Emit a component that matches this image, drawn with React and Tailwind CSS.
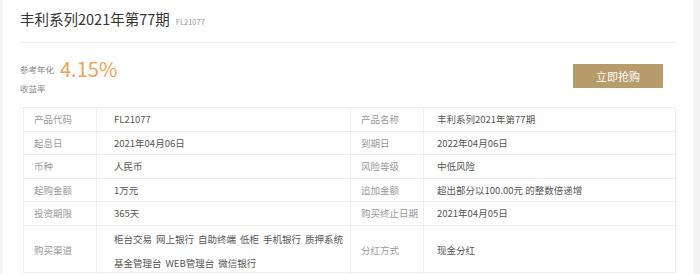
import React from 'react';

const rows = [
    ['产品代码', 'FL21077', '产品名称', '丰利系列2021年第77期'],
    ['起息日', '2021年04月06日', '到期日', '2022年04月06日'],
    ['币种', '人民币', '风险等级', '中低风险'],
    ['起购金额', '1万元', '追加金额', '超出部分以100.00元 的整数倍递增'],
    ['投资期限', '365天', '购买终止日期', '2021年04月05日'],
];

const channels = ['柜台交易', '网上银行', '自助终端', '低柜', '手机银行', '质押系统', '基金管理台', 'WEB管理台', '微信银行'];

const font = { fontFamily: '"Noto Sans CJK SC", "Noto Sans", sans-serif' };

const Cell = ({ children, kind, last }) => (
    <div
        className={
            'flex items-center border-[#eeeeee] ' +
            (last ? '' : 'border-r ') +
            (kind === 'label' ? 'pl-[10px] text-[#999999]' : kind === 'v1' ? 'pl-[17px] text-[#555555]' : 'pl-[13px] text-[#555555]')
        }
    >
        {children}
    </div>
);

const App = () => {
    return (
        <div className="w-[700px] h-[274px] bg-[#f4f4f4] overflow-hidden" style={font}>
            <div className="ml-[3px] w-[690px] h-[274px] bg-white">
                {/* Title */}
                <div className="flex items-baseline pl-[17px] pt-[8px] h-[42px]">
                    <h1 className="text-[14.5px] text-[#333333] leading-[22px]">丰利系列2021年第77期</h1>
                    <span className="ml-[6px] text-[7.5px] text-[#999999]">FL21077</span>
                </div>
                <div className="mx-[17px] h-px bg-[#f2f2f2]"></div>

                {/* Rate + button */}
                <div className="flex items-start justify-between pl-[17px] pr-[30px] h-[64px]">
                    <div className="pt-[14px]">
                        <div className="flex items-center">
                            <span className="text-[8.5px] text-[#888888]">参考年化</span>
                            <span className="ml-[6px] text-[20px] leading-[24px] text-[#f0a255]">4.15%</span>
                        </div>
                        <div className="text-[8.5px] text-[#888888] leading-[12px] mt-[1px]">收益率</div>
                    </div>
                    <button className="mt-[21px] w-[90px] h-[24px] bg-[#b89b6b] text-white text-[11px]">立即抢购</button>
                </div>

                {/* Table */}
                <div className="ml-[17px] mr-[17px] border-t border-[#f0f0f0]">
                    <div className="ml-[3px] w-[653px] border-x border-b border-[#eeeeee] text-[9.5px]">
                        {rows.map((r, i) => (
                            <div key={i} className={'grid grid-cols-[73px_254px_73px_251px] border-b border-[#eeeeee] ' + (i % 2 === 0 ? 'h-[24px]' : 'h-[23px]')}>
                                <Cell kind="label">{r[0]}</Cell>
                                <Cell kind="v1">{r[1]}</Cell>
                                <Cell kind="label">{r[2]}</Cell>
                                <Cell kind="v2" last>{r[3]}</Cell>
                            </div>
                        ))}
                        <div className="grid grid-cols-[73px_254px_73px_251px] h-[46px]">
                            <Cell kind="label">购买渠道</Cell>
                            <div className="border-r border-[#eeeeee] pl-[17px] pr-[4px] pt-px flex flex-wrap content-start gap-x-[4px] text-[#555555] leading-[24px]">
                                {channels.map((c) => (
                                    <span key={c}>{c}</span>
                                ))}
                            </div>
                            <Cell kind="label">分红方式</Cell>
                            <Cell kind="v2" last>现金分红</Cell>
                        </div>
                    </div>
                </div>
            </div>
        </div>
    );
};

export default App;
